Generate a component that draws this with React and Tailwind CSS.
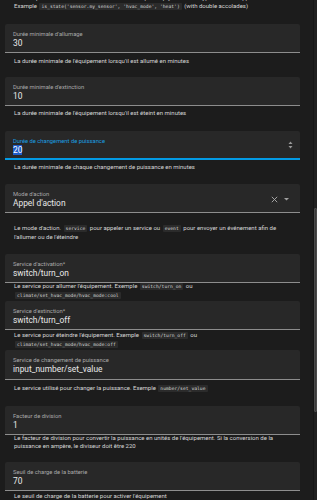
import React from "react";

const Code = ({ children }) => (
  <code className="font-['DejaVu_Sans_Mono',monospace] text-[4.7px] bg-[#2b2b2b] text-[#d8d8d8] px-[2px] py-[1px] rounded-[1px] mx-[1px]">
    {children}
  </code>
);

const Field = ({ label, value, top, focused, right }) => (
  <div
    className={`${top} mx-[5px] w-[295px] h-[30px] bg-[#282828] rounded-t-[2px] flex items-stretch ${
      focused ? "border-b-2 border-[#039be5]" : "border-b border-[#8d8d8d]"
    }`}
  >
    <div className="flex-1 pl-[8px] pt-[6px] flex flex-col">
      <div className={`text-[5.8px] leading-[8px] ${focused ? "text-[#1a9fe0]" : "text-[#a8a8a8]"}`}>{label}</div>
      <div className="text-[8.4px] leading-[10px] text-[#e8e8e8]">
        {focused ? <span className="bg-[#1f5cc8] text-white">{value}</span> : value}
      </div>
    </div>
    {right}
  </div>
);

const Helper = ({ children, cls }) => (
  <div className={`${cls} pl-[14px] pr-[18px] text-[6px] leading-[8px] text-[#d6d6d6]`}>{children}</div>
);

export default function App() {
  return (
    <div className="w-[317px] h-[500px] overflow-hidden bg-[#1c1c1c] font-['Roboto',sans-serif] flex">
      <div className="w-[313px] flex flex-col">
        <div className="-mt-[6px] px-[14px] text-[6px] leading-[8px] text-[#d6d6d6] whitespace-nowrap overflow-hidden">
          <div>The template to detect if the device is active. Keep it empty for switch type device or apparented.</div>
          <div>
            Example <Code>is_state('sensor.my_sensor', 'hvac_mode', 'heat')</Code> (with double accolades)
          </div>
        </div>

        <Field top="mt-[13px]" label="Durée minimale d'allumage" value="30" />
        <Helper cls="mt-[4px]">La durée minimale de l'équipement lorsqu'il est allumé en minutes</Helper>

        <Field top="mt-[12px]" label="Durée minimale d'extinction" value="10" />
        <Helper cls="mt-[3px]">La durée minimale de l'équipement lorsqu'il est éteint en minutes</Helper>

        <Field
          top="mt-[14px]"
          label="Durée de changement de puissance"
          value="20"
          focused
          right={
            <div className="w-[20px] flex items-center justify-center pt-[2px]">
              <svg width="5" height="8" viewBox="0 0 5 8">
                <path d="M2.5 0.5 L4.5 3 L0.5 3 Z" fill="#9a9a9a" />
                <path d="M2.5 7.5 L4.5 5 L0.5 5 Z" fill="#9a9a9a" />
              </svg>
            </div>
          }
        />
        <Helper cls="mt-[3px]">La durée minimale de chaque changement de puissance en minutes</Helper>

        <Field
          top="mt-[13px]"
          label="Mode d'action"
          value="Appel d'action"
          right={
            <div className="flex items-center gap-[6px] pr-[11px] pt-[3px]">
              <svg width="7" height="7" viewBox="0 0 7 7">
                <path d="M0.8 0.8 L6.2 6.2 M6.2 0.8 L0.8 6.2" stroke="#b0b0b0" strokeWidth="0.9" />
              </svg>
              <svg width="5" height="3" viewBox="0 0 5 3">
                <path d="M0 0 L5 0 L2.5 2.6 Z" fill="#a0a0a0" />
              </svg>
            </div>
          }
        />
        <Helper cls="mt-[11px]">
          Le mode d'action. <Code>service</Code> pour appeler un service ou <Code>event</Code> pour envoyer un
          événement afin de l'allumer ou de l'éteindre
        </Helper>

        <Field top="mt-[13px]" label="Service d'activation*" value="switch/turn_on" />
        <Helper cls="-mt-[1px]">
          Le service pour allumer l'équipement. Exemple <Code>switch/turn_on</Code> ou
          <br />
          <Code>climate/set_hvac_mode/hvac_mode:cool</Code>
        </Helper>

        <Field top="mt-[1px]" label="Service d'extinction*" value="switch/turn_off" />
        <Helper cls="mt-[1px]">
          Le service pour éteindre l'équipement. Exemple <Code>switch/turn_off</Code> ou
          <br />
          <Code>climate/set_hvac_mode/hvac_mode:off</Code>
        </Helper>

        <Field top="mt-[1px]" label="Service de changement de puissance" value="input_number/set_value" />
        <Helper cls="mt-[4px]">
          Le service utilisé pour changer la puissance. Exemple <Code>number/set_value</Code>
        </Helper>

        <Field top="mt-[13px]" label="Facteur de division" value="1" />
        <Helper cls="-mt-[1px]">
          Le facteur de division pour convertir la puissance en unités de l'équipement. Si la conversion de la
          puissance en ampère, le diviseur doit être 220
        </Helper>

        <Field top="mt-[12px]" label="Seuil de charge de la batterie" value="70" />
        <Helper cls="mt-[1px]">Le seuil de charge de la batterie pour activer l'équipement</Helper>
      </div>
      <div className="w-[4px] bg-[#202020] border-l border-[#161616] flex flex-col">
        <div className="mt-[208px] h-[204px] bg-[#3a3a3a] border border-[#4a4a4a] rounded-[1px]" />
      </div>
    </div>
  );
}
